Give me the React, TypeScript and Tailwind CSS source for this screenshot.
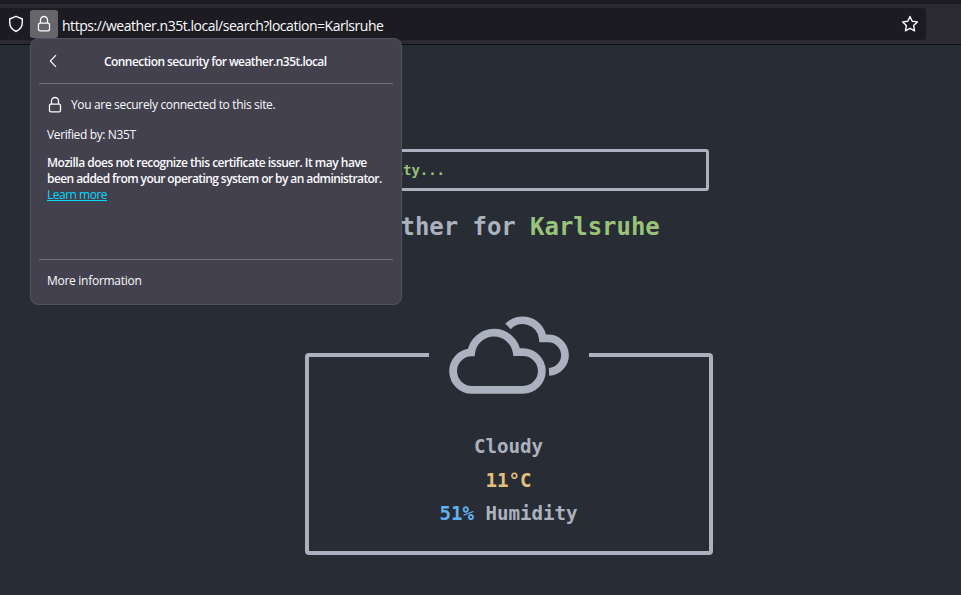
import React from 'react';

function LockIcon({ className }: { className: string }) {
  return (
    <svg viewBox="0 0 16 18" className={className} fill="none" stroke="#fbfbfe" strokeWidth="1.3">
      <rect x="2.5" y="8.2" width="11" height="7.6" rx="1.4" />
      <path d="M4.500 8V5a3.500 3.500 0 0 1 7 0v3" />
    </svg>
  );
}

function Toolbar() {
  return (
    <header className="h-[45px] border-t-4 border-b border-t-[#1c1b22] border-b-[#0c0c0d] bg-[#2b2a33] pt-1">
      <div className="flex h-8 w-[926px] items-center rounded-r-[4px] bg-[#1c1b22]">
        <div className="flex w-[30px] justify-center pl-0.5">
          <svg viewBox="0 0 16 18" className="h-[18px] w-4" fill="none" stroke="#fbfbfe" strokeWidth="1.4" strokeLinejoin="round">
            <path d="M8 1.3 14.3 4v3.6c0 3.9-2.5 7.300-6.300 8.900C4.200 14.900 1.700 11.500 1.700 7.600V4Z" />
          </svg>
        </div>
        <div className="flex h-7 w-7 items-center justify-center rounded-[3px] bg-[#66656a]">
          <LockIcon className="h-[18px] w-4" />
        </div>
        <span className="ml-1 whitespace-nowrap pt-0.5 text-[14px] tracking-[-0.47px] text-[#fbfbfe]">
          https://weather.n35t.local/search?location=Karlsruhe
        </span>
        <svg viewBox="0 0 18 18" className="mr-[7px] ml-auto h-[18px] w-[18px]" fill="none" stroke="#fbfbfe" strokeWidth="1.4" strokeLinejoin="round">
          <path d="m9 1.500 2.200 4.700 5.200.7-3.800 3.600 1 5.300L9 13.300l-4.600 2.500 1-5.300L1.600 6.900l5.200-.7Z" />
        </svg>
      </div>
    </header>
  );
}

function SecurityPanel() {
  return (
    <section className="absolute top-[38px] left-[30px] flex h-[267px] w-[372px] flex-col rounded-[8px] border border-[#52525e] bg-[#42414d] px-2 text-[12px] leading-4 text-[#fbfbfe]">
      <div className="flex h-[45px] items-center border-b border-[#72717c]">
        <svg viewBox="0 0 8 14" className="ml-[10px] h-[14px] w-2" fill="none" stroke="#fbfbfe" strokeWidth="1.2">
          <path d="M7 1.200 1.300 7 7 12.800" />
        </svg>
        <h2 className="ml-[47px] whitespace-nowrap pt-0.5 font-semibold tracking-[-0.56px]">Connection security for weather.n35t.local</h2>
      </div>
      <div className="flex-1 px-2 pt-[12px]">
        <div className="flex h-[18px] items-center">
          <LockIcon className="h-[18px] w-4" />
          <span className="ml-2 whitespace-nowrap tracking-[-0.34px]">You are securely connected to this site.</span>
        </div>
        <p className="mt-[13px] tracking-[-0.38px]">Verified by: N35T</p>
        <p className="mt-3 whitespace-nowrap font-semibold tracking-[-0.58px]">
          <span className="tracking-[-0.5px]">Mozilla does not recognize this certificate issuer. It may have</span>
          <br />
          been added from your operating system or by an administrator.
        </p>
        <a className="tracking-[-0.5px] text-[#00ddff] underline">Learn more</a>
      </div>
      <div className="h-[45px] border-t border-[#72717c] px-2 pt-[13px] tracking-[-0.28px]">More information</div>
    </section>
  );
}

function CloudIcon() {
  return (
    <svg viewBox="9 0 160 110" className="h-[110px] w-[160px]" fill="none" stroke="#abb2bf" strokeWidth="7.8">
      <path d="M52.500 89.800H103A18.700 18.700 0 0 0 103 52.200H96.700A23 23 0 0 0 51.200 52.400A18.700 18.700 0 0 0 52.500 89.800Z" />
      <path d="M88 26.400A20.400 20.400 0 0 1 122.800 38.400H127.500A16.700 16.700 0 0 1 129 71.800" />
    </svg>
  );
}

export default function App() {
  return (
    <div className="relative h-[595px] w-[961px] overflow-hidden bg-[#282c34] font-['Open_Sans',sans-serif]">
      <Toolbar />
      <main className="ml-[305px] flex w-[408px] flex-col items-center pt-[104px] font-['DejaVu_Sans_Mono',monospace] font-bold text-[#abb2bf]">
        <div className="flex h-[42px] w-[400px] items-center rounded-[3px] border-[3px] border-[#abb2bf] pl-[7px] text-[14px] tracking-[-0.03px] text-[#98c379]">
          Enter a city...
        </div>
        <h1 className="mt-[20px] h-8 whitespace-nowrap pr-px text-[24px] leading-8 tracking-[-0.05px]">
          Weather for <span className="text-[#98c379]">Karlsruhe</span>
        </h1>
        <fieldset className="mt-[57px] h-[255px] w-[408px] rounded-[4px] border-4 border-[#abb2bf] text-center text-[19.2px] tracking-[-0.04px]">
          <legend className="mx-auto h-[110px]">
            <CloudIcon />
          </legend>
          <div className="flex flex-col gap-[9.500px] pt-[25px] pr-px leading-6">
            <p>Cloudy</p>
            <p className="text-[#e5c07b]">11°C</p>
            <p>
              <span className="text-[#61afef]">51%</span> Humidity
            </p>
          </div>
        </fieldset>
      </main>
      <SecurityPanel />
    </div>
  );
}
